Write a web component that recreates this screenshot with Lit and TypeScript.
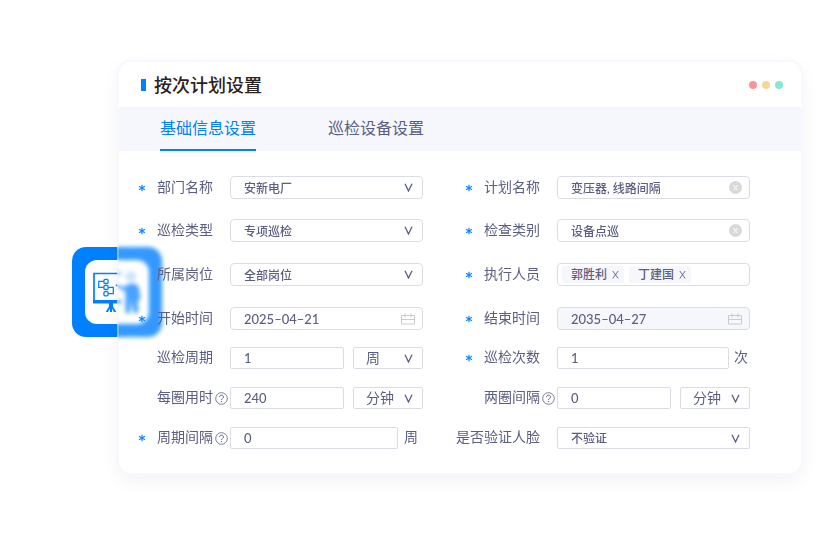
import { LitElement, html, css, svg, nothing } from "lit";
import { customElement } from "lit/decorators.js";

type Field = {
  id: string;
  label: string;
  required?: boolean;
  help?: boolean;
  kind: "select" | "clear" | "date" | "number" | "tags";
  value?: string;
  disabled?: boolean;
  unitSelect?: string;
  suffix?: string;
  tags?: string[];
};

const FIELDS: Field[] = [
  { id: "dept", label: "部门名称", required: true, kind: "select", value: "安新电厂" },
  { id: "plan", label: "计划名称", required: true, kind: "clear", value: "变压器, 线路间隔" },
  { id: "type", label: "巡检类型", required: true, kind: "select", value: "专项巡检" },
  { id: "category", label: "检查类别", required: true, kind: "clear", value: "设备点巡" },
  { id: "post", label: "所属岗位", kind: "select", value: "全部岗位" },
  { id: "staff", label: "执行人员", required: true, kind: "tags", tags: ["郭胜利", "丁建国"] },
  { id: "start", label: "开始时间", required: true, kind: "date", value: "2025–04–21" },
  { id: "end", label: "结束时间", required: true, kind: "date", value: "2035–04–27", disabled: true },
  { id: "cycle", label: "巡检周期", kind: "number", value: "1", unitSelect: "周" },
  { id: "times", label: "巡检次数", required: true, kind: "number", value: "1", suffix: "次" },
  { id: "lap", label: "每圈用时", help: true, kind: "number", value: "240", unitSelect: "分钟" },
  { id: "lapgap", label: "两圈间隔", help: true, kind: "number", value: "0", unitSelect: "分钟" },
  { id: "gap", label: "周期间隔", required: true, help: true, kind: "number", value: "0", suffix: "周" },
  { id: "face", label: "是否验证人脸", kind: "select", value: "不验证" },
];

const chevron = html`<svg class="chevron" width="9" height="9" viewBox="0 0 9 9" aria-hidden="true">
  <path d="M1 .8 4.500 8 8 .8" fill="none" stroke="currentColor" stroke-width="1.300" />
</svg>`;

const calendar = html`<svg class="calendar" width="14" height="12" viewBox="0 0 14 12" aria-hidden="true">
  <path d="M.5 2.500h13v8.500H.5zM.5 6.500h13M4 .5v4M10 .5v4" fill="none" stroke="currentColor" />
</svg>`;

const star = html`<svg class="star" width="8" height="8" viewBox="0 0 8 8" aria-hidden="true">
  <path d="M4 .7v6.600M1 2.300l6 3.400M7 2.300 1 5.700" fill="none" stroke="currentColor" stroke-width="1.200" />
</svg>`;

const help = html`<svg class="help" width="13" height="13" viewBox="0 0 13 13" role="img" aria-label="帮助">
  <circle cx="6.500" cy="6.500" r="5.800" fill="none" stroke="currentColor" stroke-width=".8" />
  <path d="M4.500 5.200C4.500 3.900 5.300 3.200 6.500 3.200s2 .7 2 1.800c0 1.300-2 1.500-2 3" fill="none" stroke="currentColor" />
  <circle cx="6.500" cy="9.600" r=".7" fill="currentColor" />
</svg>`;

@customElement("app-root")
export class AppRoot extends LitElement {
  static styles = css`
    :host {
      display: block;
      min-height: 100vh;
      background: #fff;
      color: #5a5f82;
      font-family: "Lato", "Noto Sans CJK SC", sans-serif;
      font-size: 14px;
    }
    * {
      box-sizing: border-box;
    }
    .stage {
      position: relative;
      padding: 60px 24px 48px 117px;
    }
    .badge {
      position: absolute;
      left: 72px;
      top: 247px;
    }
    .card {
      position: relative;
      overflow: hidden;
      border: 2px solid rgba(240, 240, 255, 0.5);
      border-radius: 14px;
      background: rgba(255, 255, 255, 0.2);
      background-clip: padding-box;
      backdrop-filter: blur(2px);
      box-shadow: 0 6px 18px rgba(0, 0, 0, 0.05);
    }
    .head {
      display: flex;
      align-items: center;
      gap: 8px;
      height: 45px;
      padding: 0 18px 0 22px;
      background: #fff;
    }
    .bar {
      width: 5px;
      height: 12px;
      background: #0080ff;
    }
    .title {
      flex: 1;
      margin: 0;
      font-size: 18px;
      font-weight: 500;
      line-height: 24px;
      color: #2b2224;
    }
    .dots {
      display: flex;
      gap: 5px;
    }
    .dot {
      width: 8px;
      height: 8px;
      border-radius: 50%;
    }
    .red {
      background: #ff9299;
    }
    .amber {
      background: #f9d698;
    }
    .green {
      background: #85e8d0;
    }
    .tabs {
      display: flex;
      gap: 72px;
      height: 44px;
      padding-left: 41px;
      background: #f6f7fc;
    }
    .tab {
      padding: 0;
      border: 0;
      border-bottom: 2px solid transparent;
      background: none;
      font: inherit;
      font-size: 16px;
      line-height: 42px;
      color: #5a5f82;
    }
    .tab.active {
      color: #0080ff;
      border-bottom-color: #0080ff;
    }
    .form {
      display: grid;
      grid-template-columns: 1fr 1fr;
      grid-template-rows: 43px 44px 44px 40px 40px 40px 22px;
      column-gap: 32px;
      align-items: start;
      padding: 25px 51px 24px 9px;
    }
    .field {
      display: flex;
      align-items: center;
    }
    .caption {
      display: flex;
      flex: none;
      align-items: center;
      justify-content: flex-end;
      width: 102px;
    }
    .star {
      margin-right: 11px;
      color: #0d86ff;
    }
    .label {
      height: 22px;
      line-height: 20px;
      white-space: nowrap;
    }
    .aside {
      display: flex;
      justify-content: center;
      width: 17px;
    }
    .control {
      display: flex;
      flex: 1;
      align-items: center;
      min-width: 0;
    }
    .box {
      position: relative;
      display: flex;
      flex: 1;
      align-items: center;
      min-width: 0;
      height: 23px;
      border: 1px solid #dcdde4;
      border-radius: 4px;
      background: #fff;
    }
    .box.small {
      height: 22px;
      border-radius: 2px;
    }
    .box.off {
      background: #f6f7fc;
    }
    .box.unit {
      flex: 0 0 70px;
      margin-left: 9px;
    }
    .input,
    .select {
      flex: 1;
      width: 100%;
      min-width: 0;
      height: 20px;
      margin: 0;
      padding: 2px 0 0 13px;
      border: 0;
      outline: 0;
      appearance: none;
      background: none;
      font: inherit;
      font-size: 12px;
      font-weight: 500;
      line-height: 18px;
      color: inherit;
      opacity: 1;
    }
    .input {
      padding-top: 0;
    }
    .input.digits {
      font-size: 13px;
    }
    .unit .select {
      font-size: 14px;
      font-weight: 400;
      padding: 0 0 0 12px;
    }
    .chevron {
      position: absolute;
      right: 9px;
      pointer-events: none;
    }
    .calendar {
      flex: none;
      margin-right: 7px;
      color: #c9cad6;
    }
    .clear {
      display: flex;
      flex: none;
      margin: 0 7px 0 0;
      padding: 0;
      border: 0;
      background: none;
    }
    .tags {
      gap: 5px;
      padding-left: 4px;
    }
    .tag {
      display: flex;
      align-items: center;
      gap: 5px;
      height: 17px;
      padding: 0 5px 0 9px;
      border-radius: 2px;
      background: #f6f7fc;
      font-size: 12px;
      font-weight: 500;
      line-height: 16px;
      white-space: nowrap;
    }
    .remove {
      display: flex;
      padding: 0;
      border: 0;
      background: none;
      color: inherit;
    }
    .suffix {
      flex: none;
      height: 22px;
      padding: 0 5px 0 6px;
      line-height: 20px;
    }
    .suffix.tight {
      padding-right: 2px;
      padding-left: 5px;
    }
  `;

  private select(id: string, value: string) {
    return html`<select class="select" id=${id} aria-label=${id.endsWith("-unit") ? "单位" : nothing}>
        <option>${value}</option></select
      >${chevron}`;
  }

  private control(f: Field) {
    switch (f.kind) {
      case "select":
        return html`<div class="box ${f.id === "face" ? "small" : ""}">${this.select(f.id, f.value!)}</div>`;
      case "clear":
        return html`<div class="box">
          <input class="input" id=${f.id} type="text" .value=${f.value!} />
          <button class="clear" type="button" aria-label="清除">
            <svg width="13" height="13" viewBox="0 0 13 13">
              <circle cx="6.500" cy="6.500" r="6.500" fill="#d9d9d9" />
              <path d="M4.500 4l4 5.200M8.500 4l-4 5.200" stroke="#fff" fill="none" />
            </svg>
          </button>
        </div>`;
      case "date":
        return html`<div class="box ${f.disabled ? "off" : ""}">
          <input class="input digits" id=${f.id} type="text" .value=${f.value!} ?disabled=${f.disabled} />
          ${calendar}
        </div>`;
      case "tags":
        return html`<div class="box tags" id=${f.id} role="group" aria-label=${f.label}>
          ${f.tags!.map(
            (t) => html`<span class="tag"
              >${t}<button class="remove" type="button" aria-label="移除${t}">
                <svg width="7" height="9" viewBox="0 0 7 9">
                  <path d="M.8 1l5.400 7.500M6.200 1L.8 8.500" stroke="currentColor" stroke-width=".9" fill="none" />
                </svg></button
            ></span>`
          )}
        </div>`;
      case "number":
        return html`<div class="box small">
            <input class="input digits" id=${f.id} type="text" inputmode="numeric" .value=${f.value!} />
          </div>
          ${f.unitSelect
            ? html`<div class="box small unit">${this.select(f.id + "-unit", f.unitSelect)}</div>`
            : nothing}
          ${f.suffix ? html`<span class="suffix ${f.suffix === "次" ? "tight" : ""}">${f.suffix}</span>` : nothing}`;
    }
  }

  private badge() {
    return svg`<svg class="badge" width="90" height="90" viewBox="0 0 90 90" aria-hidden="true">
      <rect width="90" height="90" rx="14" fill="#0080ff" />
      <rect x="13" y="13" width="64" height="64" rx="12" fill="#fff" />
      <g fill="none" stroke="#0080ff" stroke-width="1.700">
        <path d="M50 26.500H22V56" />
        <rect x="31.900" y="32.300" width="4.200" height="4.200" rx="1.200" stroke-width="1.300" />
        <rect x="31.900" y="38.300" width="4.200" height="4.200" rx="1.200" stroke-width="1.300" />
        <rect x="31.900" y="44.600" width="4.200" height="4.200" rx="1.200" stroke-width="1.300" />
        <path d="M31.500 34.400h-4.800v6h4.800M36.500 40.400h4.800v6.300h-4.800" stroke-width="1.200" />
        <path d="M44 38l4 2" />
      </g>
      <path d="M21 53h28v3.400H21zM37 56h4v3.500l3.300 5.500h-2.300L40 61.500V65h-2v-3.500L36 65h-2.300l3.300-5.500z" fill="#0080ff" />
      <circle cx="58.800" cy="29.300" r="3.800" fill="#d4e9ff" stroke="#66b2ff" stroke-width="1.200" />
      <path d="M47.500 38.500l6 1.500 2.500-3.200h7l3.500 2.200 2 12.500-2.500 2V66h-4.500L59.500 53 58 66h-4.500V44.500l-6-3z" fill="#1a8cff" />
    </svg>`;
  }

  render() {
    return html`<main class="stage">
      ${this.badge()}
      <section class="card">
        <header class="head">
          <span class="bar"></span>
          <h1 class="title">按次计划设置</h1>
          <div class="dots">
            <span class="dot red"></span><span class="dot amber"></span><span class="dot green"></span>
          </div>
        </header>
        <nav class="tabs">
          <button class="tab active" type="button">基础信息设置</button>
          <button class="tab" type="button">巡检设备设置</button>
        </nav>
        <form class="form">
          ${FIELDS.map(
            (f) => html`<div class="field">
              <div class="caption">
                ${f.required ? star : nothing}
                <label class="label" for=${f.id}>${f.label}</label>
                <span class="aside">${f.help ? help : nothing}</span>
              </div>
              <div class="control">${this.control(f)}</div>
            </div>`
          )}
        </form>
      </section>
    </main>`;
  }
}
